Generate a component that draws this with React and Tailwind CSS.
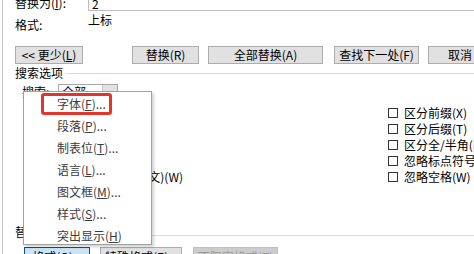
import React from 'react';

const font = { fontFamily: '"Noto Sans CJK SC", "Noto Sans", sans-serif' };

const menuItems = [
  ['字体(', 'F', ')...'],
  ['段落(', 'P', ')...'],
  ['制表位(', 'T', ')...'],
  ['语言(', 'L', ')...'],
  ['图文框(', 'M', ')...'],
  ['样式(', 'S', ')...'],
  ['突出显示(', 'H', ')'],
];

const leftChecks = ['区分大小写(H)', '全字匹配(Y)', '使用通配符(U)', '同音(英文)(K)'];
const rightChecks = ['区分前缀(X)', '区分后缀(T)', '区分全/半角(M)', '忽略标点符号(S)', '忽略空格(W)'];

const Btn = ({ className = '', children }) => (
  <div
    className={`h-[18px] flex items-center justify-center bg-[#e1e1e1] border border-[#adadad] text-[12px] leading-none text-black shrink-0 ${className}`}
  >
    {children}
  </div>
);

const Check = ({ label }) => (
  <div className="h-[16px] flex items-center gap-[6px] whitespace-nowrap shrink-0">
    <div className="w-[10px] h-[10px] border border-[#333] bg-white shrink-0" />
    <span className="text-[12px] leading-none text-black">{label}</span>
  </div>
);

const App = () => {
  return (
    <div style={font} className="relative w-[474px] h-[254px] overflow-hidden bg-white">
      <div className="ml-[2px] h-full border-l border-[#c4c4c4] pl-[12px] flex flex-col">
        {/* 替换为 */}
        <div className="flex items-start h-[20px] -mt-[9px] shrink-0">
          <div className="w-[73px] mt-[5px] text-[12px] leading-[14px] text-black whitespace-nowrap">
            替换为(<u>I</u>):
          </div>
          <div className="flex-1 h-[20px] -mr-[6px] border border-[#bcbcbc] bg-white pl-[3px] pt-[5px] text-[12px] leading-[14px] text-black">
            2
          </div>
        </div>

        {/* 格式 */}
        <div className="flex items-start h-[26px] mt-[2px] shrink-0">
          <div className="w-[73px] pt-[5px] text-[12px] leading-[14px] text-black">格式:</div>
          <div className="text-[12px] leading-[14px] text-black">上标</div>
        </div>

        {/* 按钮行 */}
        <div className="flex mt-[7px] shrink-0">
          <Btn className="w-[68px]">
            &lt;&lt; 更少(<u>L</u>)
          </Btn>
          <Btn className="w-[67px] ml-[49px]">替换(R)</Btn>
          <Btn className="w-[115px] ml-[9px]">全部替换(A)</Btn>
          <Btn className="w-[85px] ml-[11px]">查找下一处(F)</Btn>
          <Btn className="w-[64px] ml-[9px]">取消</Btn>
        </div>

        {/* 搜索选项 */}
        <div className="flex items-center h-[14px] mt-[2px] shrink-0">
          <span className="text-[12px] leading-none text-black whitespace-nowrap">搜索选项</span>
          <div className="flex-1 ml-[2px] border-t border-[#dcdcdc]" />
        </div>

        <div className="flex items-center h-[15px] mt-[4px] shrink-0">
          <div className="w-[43px] pl-[7px] text-[12px] leading-none text-black whitespace-nowrap">
            搜索:
          </div>
          <div className="w-[60px] h-[15px] flex border border-[#a8a8a8] bg-white">
            <div className="flex-1 pl-[3px] text-[12px] leading-[13px] text-black">全部</div>
            <div className="w-[15px] bg-[#e1e1e1] border-l border-[#c8c8c8]" />
          </div>
        </div>

        {/* 复选框区域 */}
        <div className="flex h-[126px] pt-[6px] shrink-0">
          <div className="ml-[12px] w-[156px] shrink-0 flex flex-col overflow-hidden">
            {leftChecks.map((l) => (
              <div key={l} className="pl-[4px]">
                <Check label={l} />
              </div>
            ))}
            <div className="flex justify-end">
              <Check label="查找单词的所有形式(英文)(W)" />
            </div>
          </div>
          <div className="ml-[205px] shrink-0 flex flex-col">
            {rightChecks.map((l) => (
              <Check key={l} label={l} />
            ))}
          </div>
        </div>

        {/* 替换 */}
        <div className="flex items-center h-[14px] shrink-0">
          <span className="text-[12px] leading-none text-black whitespace-nowrap">替换</span>
          <div className="flex-1 ml-[2px] mt-[6px] border-t border-[#dcdcdc]" />
        </div>

        <div className="flex mt-[8px] shrink-0">
          <div className="ml-[9px] w-[66px] h-[20px] flex items-center justify-center bg-[#cce4f7] border border-[#005499] text-[12px] leading-none text-black whitespace-nowrap">
            格式(<u>O</u>) ▾
          </div>
          <Btn className="ml-[10px] w-[82px] h-[20px] whitespace-nowrap">特殊格式(E) ▾</Btn>
          <div className="ml-[11px] w-[85px] h-[20px] flex items-center justify-center bg-[#cccccc] border border-[#bfbfbf] text-[12px] leading-none text-[#9a9a9a] whitespace-nowrap">
            不限定格式(T)
          </div>
        </div>
      </div>

      {/* 格式弹出菜单 */}
      <div className="absolute left-[23px] top-[91px] w-[129px] h-[154px] bg-white border border-[#a0a0a0] shadow-[2px_2px_3px_rgba(0,0,0,0.18)] pt-[1px]">
        {menuItems.map(([a, k, b]) => (
          <div key={a} className="h-[22px] flex items-center pl-[33px] text-[12px] leading-none text-[#3c3c3c] whitespace-nowrap">
            {a}
            <u>{k}</u>
            {b}
          </div>
        ))}
      </div>
      <div className="absolute left-[41px] top-[93px] w-[71px] h-[22px] border-[3px] border-[#e2352b] rounded-[3px]" />
    </div>
  );
};

export default App;
